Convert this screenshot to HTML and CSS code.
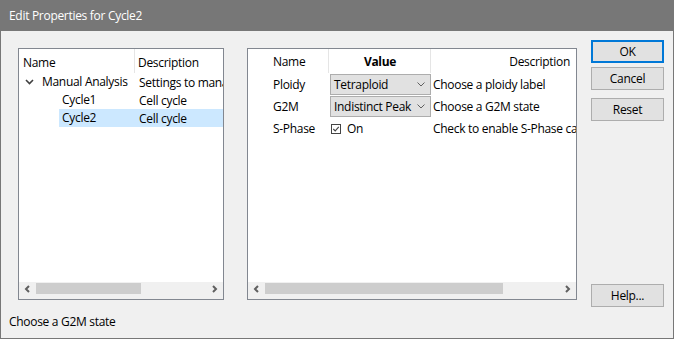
FILE: index.html
```html
<!DOCTYPE html>
<html lang="en">
<head>
    <meta charset="utf-8" />
    <title>Edit Properties for Cycle2</title>
    <link rel="stylesheet" href="styles.css">
</head>
<body>
    <div class="dialog">
        <div class="title-bar">Edit Properties for Cycle2</div>

        <div class="dialog-body">
            <!-- tree of analyses -->
            <div class="panel tree-panel">
                <div class="panel-content">
                    <div class="tree-header">
                        <div class="col-name">Name</div>
                        <div class="col-desc">Description</div>
                    </div>
                    <div class="tree-row">
                        <div class="col-name">
                            <svg class="tree-toggle" width="9" height="6" viewBox="0 0 9 6">
                                <path d="M1 1 L4.5 4.5 L8 1" fill="none" stroke="#404040" stroke-width="1.6" />
                            </svg>
                            Manual Analysis
                        </div>
                        <div class="col-desc">Settings to manage</div>
                    </div>
                    <div class="tree-row child">
                        <div class="col-name">Cycle1</div>
                        <div class="col-desc">Cell cycle</div>
                    </div>
                    <div class="tree-row child selected">
                        <div class="col-name">Cycle2</div>
                        <div class="col-desc">Cell cycle</div>
                    </div>
                </div>
                <div class="hscroll">
                    <span class="arrow">
                        <svg width="7" height="8" viewBox="0 0 7 8"><path d="M5 1 L2 4 L5 7" fill="none" stroke="#606060" stroke-width="2" /></svg>
                    </span>
                    <div class="track"><div class="thumb" style="width: 105px"></div></div>
                    <span class="arrow">
                        <svg width="7" height="8" viewBox="0 0 7 8"><path d="M2 1 L5 4 L2 7" fill="none" stroke="#606060" stroke-width="2" /></svg>
                    </span>
                </div>
            </div>

            <!-- property grid -->
            <div class="panel props-panel">
                <div class="panel-content">
                    <div class="props-grid">
                        <div class="p-name head">Name</div>
                        <div class="p-value head">Value</div>
                        <div class="p-desc head right">Description</div>

                        <div class="p-name">Ploidy</div>
                        <div class="p-value">
                            <div class="combo">
                                <span>Tetraploid</span>
                                <svg width="8" height="5" viewBox="0 0 8 5"><path d="M0.5 0.5 L4 4 L7.5 0.5" fill="none" stroke="#606060" stroke-width="1" /></svg>
                            </div>
                        </div>
                        <div class="p-desc">Choose a ploidy label</div>

                        <div class="p-name">G2M</div>
                        <div class="p-value">
                            <div class="combo">
                                <span>Indistinct Peak</span>
                                <svg width="8" height="5" viewBox="0 0 8 5"><path d="M0.5 0.5 L4 4 L7.5 0.5" fill="none" stroke="#606060" stroke-width="1" /></svg>
                            </div>
                        </div>
                        <div class="p-desc">Choose a G2M state</div>

                        <div class="p-name">S-Phase</div>
                        <div class="p-value">
                            <span class="check">
                                <svg width="10" height="10" viewBox="0 0 10 10">
                                    <rect x="0.5" y="0.5" width="9" height="9" fill="none" stroke="#444" stroke-width="1" />
                                    <path d="M2.3 5 L4.2 6.9 L7.8 2.8" fill="none" stroke="#444" stroke-width="1.1" />
                                </svg>
                                On
                            </span>
                        </div>
                        <div class="p-desc">Check to enable S-Phase calculation</div>
                    </div>
                </div>
                <div class="hscroll">
                    <span class="arrow">
                        <svg width="7" height="8" viewBox="0 0 7 8"><path d="M5 1 L2 4 L5 7" fill="none" stroke="#606060" stroke-width="2" /></svg>
                    </span>
                    <div class="track"><div class="thumb" style="width: 238px"></div></div>
                    <span class="arrow">
                        <svg width="7" height="8" viewBox="0 0 7 8"><path d="M2 1 L5 4 L2 7" fill="none" stroke="#606060" stroke-width="2" /></svg>
                    </span>
                </div>
            </div>

            <div class="buttons">
                <button class="btn btn-default">OK</button>
                <button class="btn">Cancel</button>
                <button class="btn btn-gap">Reset</button>
                <div class="spacer"></div>
                <button class="btn btn-last">Help...</button>
            </div>
        </div>

        <div class="status-bar">Choose a G2M state</div>
    </div>
</body>
</html>
```

FILE: styles.css
```css
* {
    margin: 0;
    padding: 0;
    box-sizing: border-box;
}

body {
    font-family: 'Open Sans', 'Liberation Sans', sans-serif;
    font-size: 12px;
    letter-spacing: -0.3px;
    color: #000;
    background: #f0f0f0;
}

.dialog {
    width: 674px;
    height: 339px;
    border: 1px solid #777;
    border-top: none;
    background: #f0f0f0;
    display: flex;
    flex-direction: column;
}

.title-bar {
    height: 31px;
    margin: 0 -1px;
    background: #777777;
    color: #fff;
    padding-left: 9px;
    line-height: 31px;
    font-size: 12px;
}

.dialog-body {
    display: flex;
    padding: 17px 0 0 17px;
    height: 269px;
}

.panel {
    background: #fff;
    border: 1px solid #828790;
    height: 252px;
    display: flex;
    flex-direction: column;
    overflow: hidden;
}

.tree-panel {
    width: 206px;
    margin-right: 23px;
}

.props-panel {
    width: 330px;
    margin-right: 14px;
}

.panel-content {
    flex: 1;
    overflow: hidden;
}

/* tree */
.tree-header,
.tree-row {
    display: flex;
    white-space: nowrap;
}

.tree-header {
    height: 24px;
    line-height: 27px;
}

.tree-header .col-name {
    width: 116px;
    padding-left: 4px;
    border-right: 1px solid #e5e5e5;
}

.tree-header .col-desc {
    padding-left: 3px;
}

.tree-row {
    height: 18px;
    line-height: 20px;
}

.tree-row .col-name {
    width: 117px;
    padding-left: 6px;
    display: flex;
    align-items: center;
    gap: 8px;
}

.tree-row .col-desc {
    padding-left: 3px;
    overflow: hidden;
    flex: 1;
}

.tree-row.child .col-name {
    padding-left: 43px;
}

.tree-row.selected {
    background: #cce8ff;
    margin-left: 40px;
}

.tree-row.selected .col-name {
    padding-left: 3px;
    width: 77px;
}

.tree-toggle {
    flex-shrink: 0;
    margin-top: -1px;
}

/* property grid */
.props-grid {
    display: grid;
    grid-template-columns: 81px 102px 200px;
    grid-auto-rows: 22px;
    grid-template-rows: 24px;
    white-space: nowrap;
}

.props-grid > div {
    display: flex;
    align-items: center;
    overflow: hidden;
}

.p-name {
    padding-left: 25px;
    padding-top: 1px;
}

.p-name.head {
    border-right: 1px solid #e5e5e5;
}

.p-value.head {
    justify-content: center;
    font-weight: bold;
    border-right: 1px solid #e5e5e5;
    padding-top: 1px;
}

.p-desc {
    padding-left: 2px;
    padding-top: 1px;
}

.p-desc.head.right {
    width: 144px;
    justify-content: flex-end;
    padding-right: 5px;
}

.p-value {
    padding-left: 1px;
}

.combo {
    width: 101px;
    height: 21px;
    background: #e1e1e1;
    border: 1px solid #adadad;
    display: flex;
    align-items: center;
    justify-content: space-between;
    padding: 0 5px 0 3px;
}

.check {
    display: flex;
    align-items: center;
    gap: 6px;
    padding-left: 1px;
    padding-top: 1px;
}

/* scrollbar */
.hscroll {
    height: 17px;
    background: #f0f0f0;
    display: flex;
    align-items: flex-start;
}

.hscroll .arrow {
    width: 17px;
    height: 12px;
    display: flex;
    align-items: center;
    justify-content: center;
    padding-top: 1px;
}

.hscroll .track {
    flex: 1;
    padding-top: 1px;
}

.hscroll .thumb {
    height: 11px;
    background: #cdcdcd;
}

/* buttons */
.buttons {
    width: 73px;
    display: flex;
    flex-direction: column;
    margin-top: -8px;
    height: 267px;
}

.btn {
    font-family: inherit;
    font-size: 12px;
    letter-spacing: -0.3px;
    height: 23px;
    background: #e1e1e1;
    border: 1px solid #adadad;
    margin-bottom: 4px;
    color: #000;
    flex-shrink: 0;
}

.btn-default {
    border: 2px solid #0078d7;
}

.btn-gap {
    margin-top: 4px;
}

.btn-last {
    margin-bottom: 0;
}

.spacer {
    flex: 1;
}

.status-bar {
    flex: 1;
    padding-left: 8px;
    display: flex;
    align-items: center;
    padding-top: 4px;
}
```
